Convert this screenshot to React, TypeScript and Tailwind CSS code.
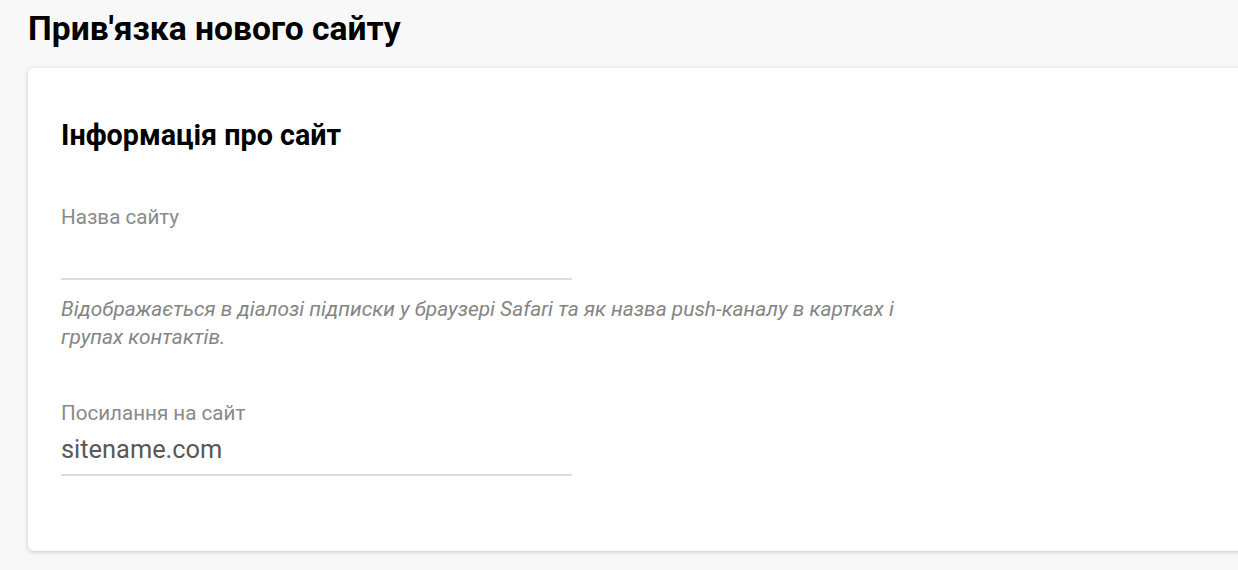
import React from "react";

export default function App() {
  return (
    <div className="min-h-[570px] w-full overflow-hidden bg-[#f8f8f8] pl-[28px] pt-[9px] font-['Roboto',sans-serif]">
      <h1 className="text-[33.6px] font-bold leading-[40px] text-black">Прив'язка нового сайту</h1>
      <div className="mt-[19px] w-[1260px] shrink-0 rounded-[6px] bg-white pl-[33px] pt-[50px] pb-[75px] shadow-[0_1px_4px_rgba(0,0,0,0.2)]">
        <h2 className="text-[28.7px] font-bold leading-[34px] text-black">Інформація про сайт</h2>
        <div className="mt-[53px] w-[511px]">
          <label className="block text-[20.6px] leading-[24px] text-[#8a8a8a]">Назва сайту</label>
          <div className="h-[51px] border-b-2 border-[#dcdcdc]" />
        </div>
        <p className="mt-[15px] w-[860px] text-[20.9px] italic leading-[28px] text-[#858585]">
          Відображається в діалозі підписки у браузері Safari та як назва push-каналу в картках і групах контактів.
        </p>
        <div className="mt-[50px] w-[511px]">
          <label className="block text-[20.6px] leading-[24px] text-[#8a8a8a]">Посилання на сайт</label>
          <div className="flex h-[51px] items-center border-b-2 border-[#dcdcdc] text-[25.4px] text-[#585858]">sitename.com</div>
        </div>
      </div>
    </div>
  );
}
